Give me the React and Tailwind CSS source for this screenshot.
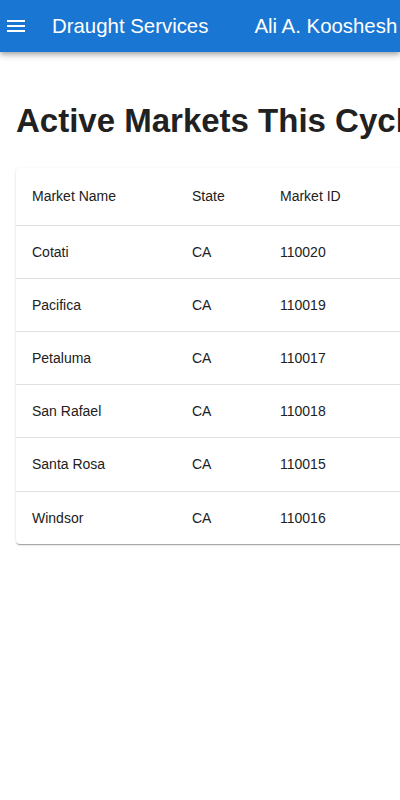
import React from "react";

const MARKETS = [
  { name: "Cotati",     state: "CA", id: "110020" },
  { name: "Pacifica",   state: "CA", id: "110019" },
  { name: "Petaluma",   state: "CA", id: "110017" },
  { name: "San Rafael", state: "CA", id: "110018" },
  { name: "Santa Rosa", state: "CA", id: "110015" },
  { name: "Windsor",    state: "CA", id: "110016" },
];

const MenuIcon = () => (
  <svg className="w-6 h-6" viewBox="0 0 24 24" fill="currentColor">
    <path d="M3 18h18v-2H3zm0-5h18v-2H3zm0-7v2h18V6z" />
  </svg>
);

export default function App() {
  return (
    <div className="w-[400px] h-[800px] overflow-hidden bg-white text-[#212121] font-['Liberation_Sans',Arial,sans-serif]">
      {/* App bar */}
      <header className="relative z-10 h-[52px] bg-[#1976d2] text-white flex items-center whitespace-nowrap shadow-[0px_2px_4px_-1px_rgba(0,0,0,0.2),0px_4px_5px_0px_rgba(0,0,0,0.14),0px_1px_10px_0px_rgba(0,0,0,0.12)]">
        <button className="ml-[4px] mr-[24px] w-6 h-6 flex items-center justify-center">
          <MenuIcon />
        </button>
        <h1 className="text-[20.4px] leading-[32px]">Draught Services</h1>
        <span className="ml-[46px] text-[20.4px] leading-[32px]">Ali A. Kooshesh</span>
      </header>

      <main className="px-[16px] w-[700px]">
        <h2 className="mt-[49px] mb-[27px] text-[33px] leading-[40px] font-bold whitespace-nowrap">
          Active Markets This Cycle
        </h2>

        {/* Markets table */}
        <div className="bg-white rounded-[4px] shadow-[0px_2px_1px_-1px_rgba(0,0,0,0.2),0px_1px_1px_0px_rgba(0,0,0,0.14),0px_1px_3px_0px_rgba(0,0,0,0.12)]">
          <table className="w-full text-[14px] border-collapse text-left">
            <thead>
              <tr className="border-b border-[#e0e0e0]">
                <th className="w-[160px] p-[16px] leading-[24.5px] font-normal">Market Name</th>
                <th className="w-[88px] p-[16px] leading-[24.5px] font-normal">State</th>
                <th className="w-[140px] p-[16px] leading-[24.5px] font-normal">Market ID</th>
                <th className="p-[16px] leading-[24.5px] font-normal"></th>
              </tr>
            </thead>
            <tbody>
              {MARKETS.map((m, i) => (
                <tr key={m.id} className={i < MARKETS.length - 1 ? "border-b border-[#e0e0e0]" : ""}>
                  <td className="p-[16px] leading-[20.2px]">{m.name}</td>
                  <td className="p-[16px] leading-[20.2px]">{m.state}</td>
                  <td className="p-[16px] leading-[20.2px]">{m.id}</td>
                  <td className="p-[16px] leading-[20.2px]"></td>
                </tr>
              ))}
            </tbody>
          </table>
        </div>
      </main>
    </div>
  );
}
